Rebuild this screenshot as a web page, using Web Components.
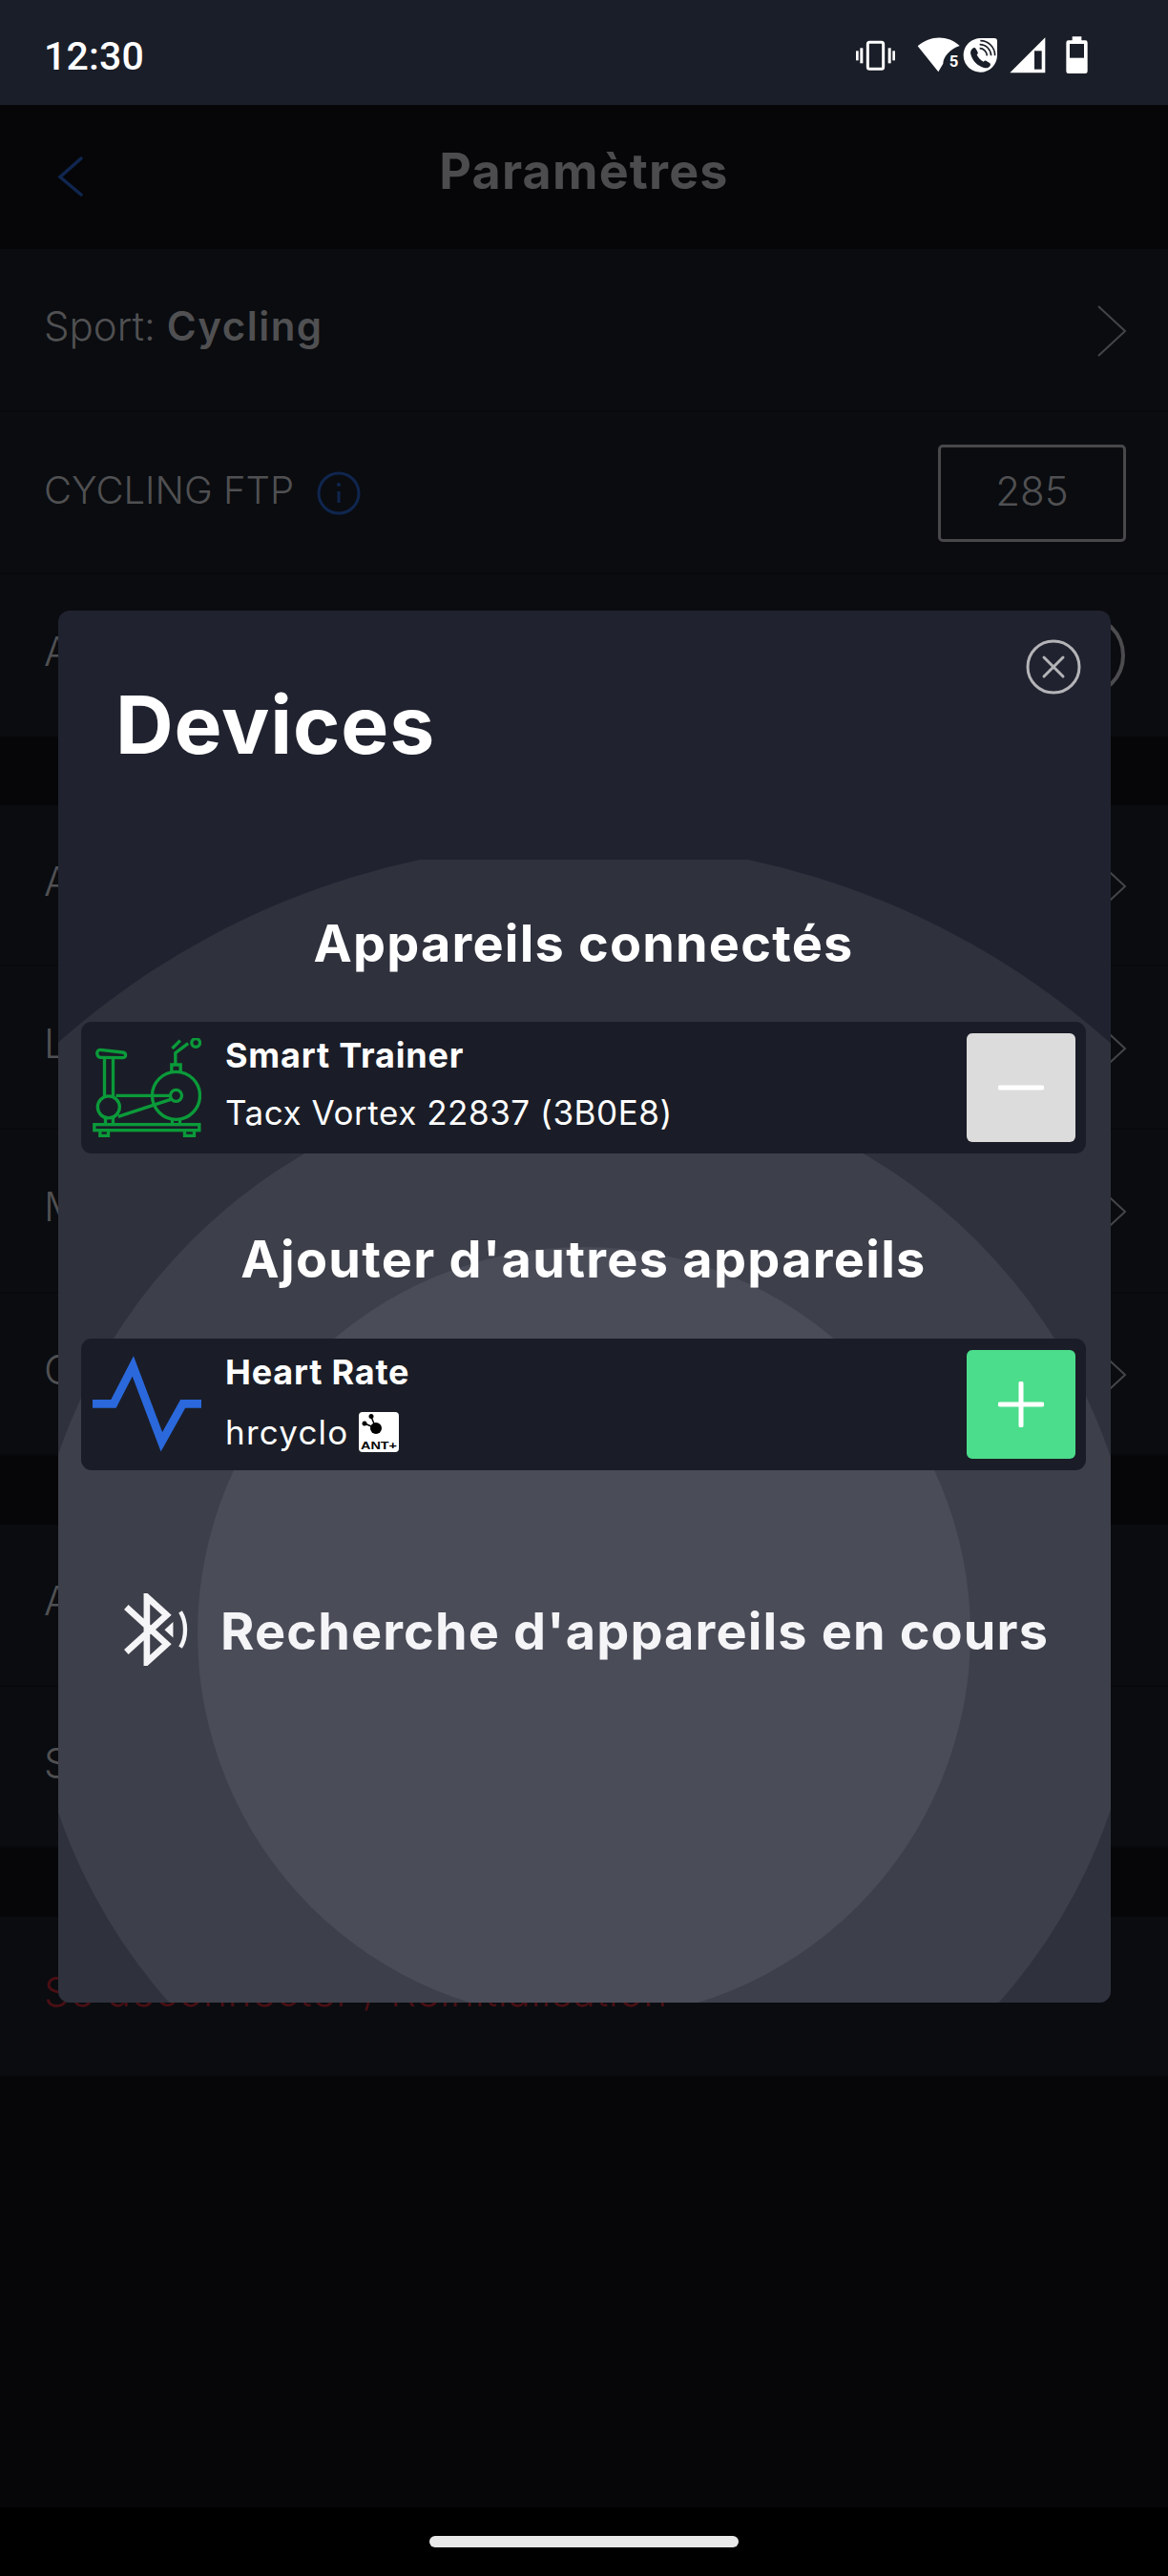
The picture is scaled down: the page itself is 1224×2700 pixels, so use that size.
<!DOCTYPE html>
<html lang="fr"><head><meta charset="utf-8"><title>Paramètres</title>
<style>
html,body{margin:0;padding:0;background:#060608;}
body{width:1224px;height:2700px;position:relative;overflow:hidden;font-family:Inter,"Noto Sans",sans-serif;}
</style></head><body>
<phone-screen>
  <status-bar></status-bar>
  <page-header title="Paramètres"></page-header>
  <setting-row h="171"><span>Sport: <b style="font-weight:600;letter-spacing:1.500px">Cycling</b></span><row-chevron slot="end"></row-chevron></setting-row>
  <setting-row h="170" caps><span>CYCLING FTP</span><info-dot></info-dot><value-box slot="end">285</value-box></setting-row>
  <setting-row h="171"><span>A</span><round-toggle slot="end"></round-toggle></setting-row>
  <list-gap h="71"></list-gap>
  <setting-row h="169"><span>A</span><row-chevron slot="end"></row-chevron></setting-row>
  <setting-row h="171"><span>L</span><row-chevron slot="end"></row-chevron></setting-row>
  <setting-row h="172"><span>M</span><row-chevron slot="end"></row-chevron></setting-row>
  <setting-row h="170"><span>C</span><row-chevron slot="end"></row-chevron></setting-row>
  <list-gap h="72"></list-gap>
  <setting-row h="170"><span>A</span></setting-row>
  <setting-row h="169"><span>S</span></setting-row>
  <list-gap h="72"></list-gap>
  <setting-row h="168" danger><span>Se déconnecter / Réinitialisation</span></setting-row>
  <nav-pill></nav-pill>
  <devices-modal>
    <h-line>Appareils connectés</h-line>
    <device-row name="Smart Trainer" action="remove">
      <svg slot="icon" width="114" height="104" viewBox="112 145 341 312" fill="none" stroke="#0b9a3a" stroke-width="10">
        <rect x="117" y="417" width="330" height="18"/>
        <path d="M135 438v14h26v-14M401 438v14h30v-14M152 395v20M176 395v20M362 400v15M386 400v15"/>
        <circle cx="162" cy="362" r="34.500"/>
        <path d="M149 208v122M176 208v122"/>
        <path d="M136 182l70 8c13 2 12 18-1 17l-67-1c-16 0-16-25-2-24z"/>
        <circle cx="374" cy="326" r="75"/>
        <circle cx="374" cy="326" r="18"/>
        <path d="M185 326h170M192 392l165-54"/>
        <path d="M360 250v-21h28v21M372 228v-36l40-30"/>
        <circle cx="436" cy="160" r="13"/>
        <path d="M362 178l25-25"/>
      </svg>
      <span slot="sub">Tacx Vortex 22837 (3B0E8)</span>
    </device-row>
    <h-line gap>Ajouter d'autres appareils</h-line>
    <device-row name="Heart Rate" action="add">
      <svg slot="icon" width="114" height="104" viewBox="81 124 342 312" fill="none" stroke="#2a68dc" stroke-width="26">
        <path d="M81 278h66l61-118 90 238 67-120h58" stroke-miterlimit="10"/>
      </svg>
      <span slot="sub" style="letter-spacing:1.200px">hrcyclo</span>
      <ant-badge slot="sub"></ant-badge>
    </device-row>
    <search-line>Recherche d'appareils en cours</search-line>
  </devices-modal>
</phone-screen>
<script>
function def(name, css, html, extra){
  customElements.define(name, class extends HTMLElement{
    connectedCallback(){
      if(this.shadowRoot) return;
      const r=this.attachShadow({mode:'open'});
      r.innerHTML='<style>'+css+'</style>'+(typeof html==='function'?html(this):html);
      if(extra) extra(this,r);
    }
  });
}
def('phone-screen',':host{display:flex;flex-direction:column;width:1224px;height:2700px;position:relative;overflow:hidden;background:#060608;color:#4a4a4c;font-family:Inter,"Noto Sans",sans-serif}','<slot></slot>');
def('status-bar',`
:host{display:flex;align-items:center;justify-content:space-between;height:110px;box-sizing:border-box;background:#1a1e28;padding:0 0 0 46px;flex:none;position:relative}
.t{font:500 41px/50px Roboto,sans-serif;color:#fff;position:relative;top:4px;letter-spacing:.2px}
svg{position:absolute;left:860px;top:20px}`,
`<span class="t">12:30</span>
<svg width="320" height="80" viewBox="0 0 960 240" fill="#fff">
  <rect x="148" y="73" width="49" height="84" rx="6" fill="none" stroke="#fff" stroke-width="9"/>
  <rect x="124" y="91" width="9" height="48"/><rect x="111" y="100" width="8" height="30"/>
  <rect x="212" y="91" width="9" height="48"/><rect x="226" y="100" width="8" height="30"/>
  <path d="M305 85C345 50 400 50 437 84C405 95 385 120 385 140L370 166Z"/>
  <text x="404" y="150" font-family="Roboto,sans-serif" font-weight="700" font-size="50" textLength="32">5</text>
  <path d="M503 60H546Q555 60 555 69V113C555 143 532 167 502 167C472 167 449 143 449 113C449 84 473 60 503 60Z"/>
  <path d="M477 93c4-4 9-4 12 2l5 9c1 3 0 5-3 8 4 10 11 17 21 22 3-3 5-4 8-3l10 6c5 3 5 8 1 12-5 5-11 6-18 4-21-7-35-21-41-42-2-7 0-13 5-18z" fill="#1a1e28"/>
  <path d="M500 92c12 0 22 10 23 23M500 80c20 0 35 15 36 35M502 68c26 0 46 21 46 47" fill="none" stroke="#1a1e28" stroke-width="5"/>
  <path d="M595 169L706 58V169Z"/><rect x="672" y="100" width="23" height="58" fill="#1a1e28"/>
  <path d="M791 55h29v12h12q7 0 7 7v90q0 7-7 7h-53q-7 0-7-7V74q0-7 7-7h12z"/><rect x="783" y="78" width="45" height="44" fill="#1a1e28"/>
</svg>`);
def('page-header',`
:host{display:flex;height:151px;flex:none;align-items:center;justify-content:center;position:relative;background:#060608}
h1{margin:0;font:700 52px/70px Inter,sans-serif;color:#4c4c4e;position:relative;top:-6px;letter-spacing:1.200px}
svg{position:absolute;left:59px;top:53px}`,
t=>`<svg width="30" height="43" viewBox="0 0 30 43" fill="none" stroke="#10264f" stroke-width="3.500" stroke-linecap="round"><path d="M26 3L4 22.500L26 41"/></svg><h1>${t.getAttribute('title')}</h1>`);
def('setting-row',`
:host{display:flex;align-items:center;box-sizing:border-box;padding:0 45px 0 46px;background:#0a0c10;flex:none;font:400 42px/50px Inter,sans-serif;color:#505052;border-bottom:2px solid #08090c}
:host([caps]){font-size:40px;padding-right:44px}
:host([danger]){color:#4a0f14;letter-spacing:.900px}
.s{flex:1 1 auto;display:flex;align-items:center;gap:24px;position:relative;top:-4px}
:host([caps]) .s{top:-2px}
::slotted(span){font-weight:300}`,
t=>`<style>:host{height:${t.getAttribute('h')}px}</style><div class="s"><slot></slot></div><slot name="end"></slot>`);
def('list-gap',':host{display:block;flex:none;background:#060608}',t=>`<style>:host{height:${t.getAttribute('h')}px}</style>`);
def('row-chevron',':host{display:block;line-height:0;position:relative;top:1px;margin-right:-2px}','<svg width="32" height="56" viewBox="0 0 32 56" fill="none" stroke="#454547" stroke-width="2"><path d="M2 2L30 28L2 54"/></svg>');
def('info-dot',':host{display:block;line-height:0;position:relative;top:3px}','<svg width="46" height="46" viewBox="0 0 46 46" fill="none" stroke="#10264f" stroke-width="3"><circle cx="23" cy="23" r="21"/><path d="M23 21v12"/><circle cx="23" cy="14" r="2" fill="#10264f" stroke="none"/></svg>');
def('value-box',':host{display:flex;width:197px;height:102px;box-sizing:border-box;border:3px solid #48484a;border-radius:5px;align-items:center;justify-content:center;font:300 42px/50px Inter,sans-serif;color:#505052;position:relative;top:1px;padding-bottom:5px}','<slot></slot>');
def('round-toggle',':host{display:block;width:88px;height:88px;box-sizing:border-box;border:4px solid #4c4c4e;border-radius:50%;flex:none}','');
def('nav-pill',`
:host{display:flex;position:absolute;left:0;right:0;bottom:0;height:72px;background:#000;justify-content:center;align-items:flex-start}
i{display:block;width:324px;height:12px;border-radius:6px;background:#e9e9e9;margin-top:30px}`,'<i></i>');
def('devices-modal',`
:host{display:block;position:absolute;left:61px;top:640px;width:1103px;height:1459px;background:#20232f;border-radius:12px;overflow:hidden;color:#fff}
.bg{position:absolute;left:0;top:261px;display:block}
.c{position:relative;display:flex;flex-direction:column;padding:70px 26px 0 24px;height:100%;box-sizing:border-box}
h2{margin:0 0 144px 36px;font:700 84px/100px Inter,sans-serif;letter-spacing:.900px}
.x{position:absolute;left:1014px;top:30px}`,
`<svg class="bg" width="1103" height="1198" viewBox="0 0 1103 1198"><circle cx="551" cy="811" r="829" fill="#2f313d"/><circle cx="551" cy="811" r="582" fill="#3d3f4a"/><circle cx="551" cy="811" r="405" fill="#4a4c58"/></svg>
<div class="c"><h2>Devices</h2><slot></slot></div>
<svg class="x" width="58" height="58" viewBox="0 0 58 58" fill="none" stroke="#b4b4b8" stroke-width="3"><circle cx="29" cy="29" r="27"/><path d="M19 19L39 39M39 19L19 39" stroke-linecap="round"/></svg>`);
def('h-line',`
:host{display:block;text-align:center;font:700 54px/70px Inter,sans-serif;color:#fff;margin:0 0 47px;letter-spacing:1.200px}
:host([gap]){margin:76px 0 48px;letter-spacing:1.300px}`,'<slot></slot>');
def('device-row',`
:host{display:flex;height:138px;box-sizing:border-box;padding:12px 11px 12px 12px;background:#1a1d27;border-radius:11px;align-items:center;flex:none}
.i{width:114px;height:104px;flex:none;line-height:0}
.t{flex:1;margin-left:25px;display:flex;flex-direction:column;color:#fff}
.n{font:700 36px/44px Inter,sans-serif;position:relative;top:-4px;letter-spacing:.800px}
.s{font:400 35px/44px Inter,sans-serif;display:flex;align-items:center;gap:11px;margin-top:16px;position:relative;top:-4px;letter-spacing:.550px}
:host([action=add]) .s{top:-1px}
.b{width:114px;height:114px;border-radius:6px;flex:none;display:flex;align-items:center;justify-content:center}
.remove{background:#dcdcdc}.add{background:#4cdd8c}`,
t=>{const a=t.getAttribute('action');return `<div class="i"><slot name="icon"></slot></div><div class="t"><div class="n">${t.getAttribute('name')}</div><div class="s"><slot name="sub"></slot></div></div>
<div class="b ${a}"><svg width="48" height="48" viewBox="0 0 48 48" stroke="#fff" stroke-width="5" stroke-linecap="round"><path d="M2 24H46${a==='add'?'M24 2V46':''}"/></svg></div>`});
def('ant-badge',':host{display:block;width:42px;height:42px;line-height:0;letter-spacing:0}',`<svg width="42" height="42" viewBox="0 0 42 42"><rect width="42" height="42" rx="4" fill="#fff"/><circle cx="18" cy="17" r="6"/><circle cx="13" cy="4.500" r="2.500"/><circle cx="6" cy="12" r="2.500"/><path d="M13 5l5 12M6 12l12 5" stroke="#000" stroke-width="1.500"/><text x="21" y="38.500" text-anchor="middle" font-family="Liberation Sans,sans-serif" font-weight="700" font-size="11" textLength="38" lengthAdjust="spacingAndGlyphs">ANT+</text></svg>`);
def('search-line',`
:host{display:flex;align-items:center;margin:131px 0 0 45px;color:#f5f5f8;font:700 54px/70px Inter,sans-serif;letter-spacing:1.150px}
svg{flex:none;margin-right:33px;position:relative;top:-2px}`,
`<svg width="68" height="76" viewBox="90 85 205 228" fill="none" stroke="#f5f5f8"><path d="M97 128L225 245L162 302V96L225 153L97 270" stroke-width="20"/><path d="M245 175L218 200L245 225Z" fill="#f5f5f8" stroke="none"/><path d="M268 143C288 175 288 225 268 255" stroke-width="13"/></svg><span><slot></slot></span>`);
</script>
</body></html>
